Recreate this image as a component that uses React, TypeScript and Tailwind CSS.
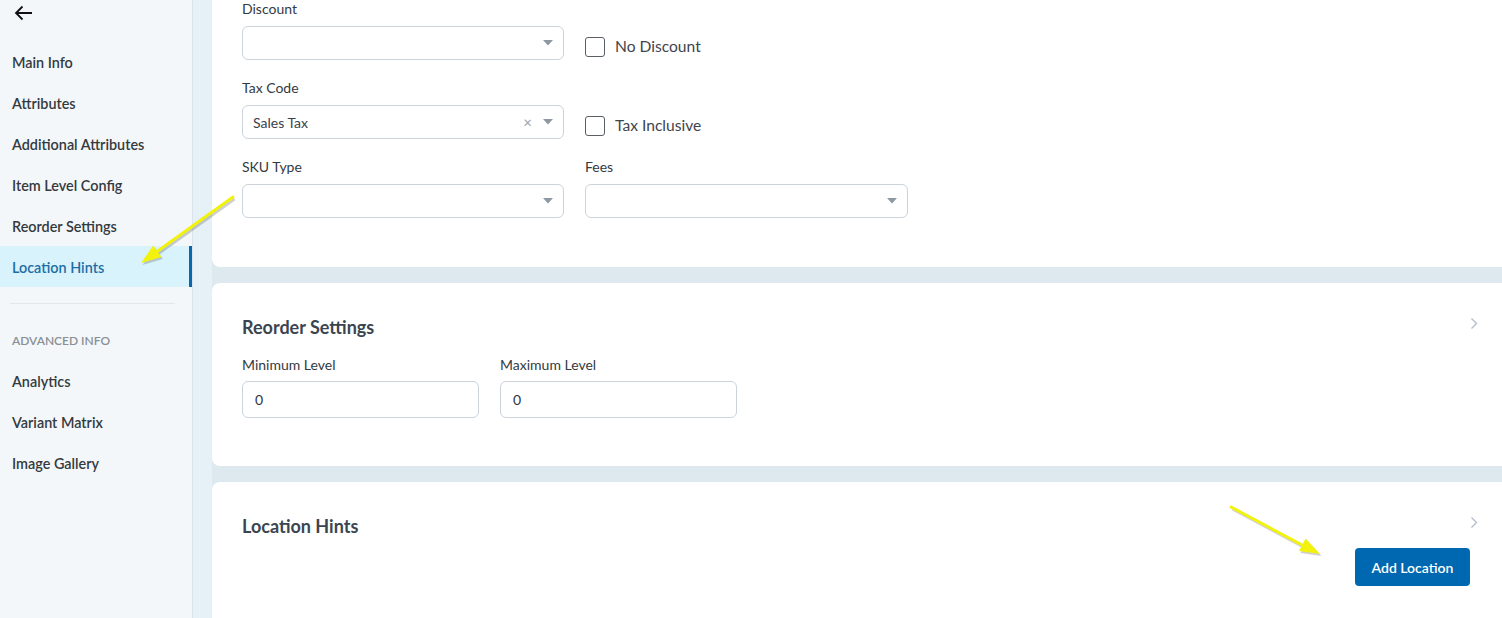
import React from "react";

const navTop = ["Main Info", "Attributes", "Additional Attributes", "Item Level Config", "Reorder Settings"];
const navAdvanced = ["Analytics", "Variant Matrix", "Image Gallery"];

function Caret() {
  return (
    <svg width="10" height="6" viewBox="0 0 10 6" className="shrink-0">
      <path d="M0 0 L10 0 L5 5.5 Z" fill="#8d98a3" />
    </svg>
  );
}

function Chevron() {
  return (
    <svg width="8" height="13" viewBox="0 0 8 13" className="shrink-0">
      <path d="M1.5 1.5 L6.5 6.5 L1.5 11.5" fill="none" stroke="#b7bdcc" strokeWidth="1.4" />
    </svg>
  );
}

function Label({ children }: { children: React.ReactNode }) {
  return <div className="h-[18px] text-[14px] leading-[18px] text-[#333a42]">{children}</div>;
}

function Select({ value, clearable, width }: { value?: string; clearable?: boolean; width: string }) {
  return (
    <div className={`${width} mt-2 flex h-[34px] items-center rounded-md border border-[#ccd3da] bg-white pl-[10px] pr-[10px]`}>
      <span className="flex-1 text-[14px] text-[#3a4149]">{value}</span>
      {clearable && <span className="mr-[11px] text-[15px] leading-none text-[#9aa3ac]">×</span>}
      <Caret />
    </div>
  );
}

function Check({ label }: { label: string }) {
  return (
    <div className="flex items-center gap-[10px] pt-[34px]">
      <div className="h-[20px] w-[20px] rounded-[3px] border border-[#5a5f66] bg-white" />
      <span className="-mt-[3px] text-[15.6px] leading-[20px] text-[#3f454c]">{label}</span>
    </div>
  );
}

function NumberField({ label }: { label: string }) {
  return (
    <div className="w-[237px]">
      <Label>{label}</Label>
      <div className="mt-[7px] flex h-[37px] items-center rounded-md border border-[#ccd3da] px-[12px] text-[14px] text-[#2f353b]">
        0
      </div>
    </div>
  );
}

function NavItem({ children }: { children: React.ReactNode }) {
  return (
    <div className="flex h-[41px] items-center pl-3 pt-[2px] text-[14.4px] font-semibold text-[#343a40]">
      {children}
    </div>
  );
}

export default function App() {
  return (
    <div className="relative flex h-[618px] w-full overflow-hidden font-['Lato',sans-serif]">
      {/* left navigation */}
      <aside className="flex w-[193px] shrink-0 flex-col border-r border-[#dbe3ea] bg-[#f3f7fa]">
        <div className="flex h-[25px] items-center pl-[14px]">
          <svg width="19" height="16" viewBox="0 0 19 16">
            <path d="M18 8 H2 M8.5 1.5 L2 8 L8.5 14.5" fill="none" stroke="#111" strokeWidth="1.8" />
          </svg>
        </div>
        <nav className="mt-4 flex flex-col">
          {navTop.map((n) => (
            <NavItem key={n}>{n}</NavItem>
          ))}
          <div className="flex h-[41px] items-center border-r-[3px] border-[#0a66ad] bg-[#d9f3fc] pl-3 pt-[2px] text-[14.4px] font-semibold text-[#1c6ea6]">
            Location Hints
          </div>
        </nav>
        <div className="ml-[10px] mt-4 w-[165px] border-t border-[#e0e7ed]" />
        <div className="mt-[28px] pl-3 text-[12px] font-semibold leading-[18px] text-[#8a8f95]">ADVANCED INFO</div>
        <div className="mt-[10px] flex flex-col">
          {navAdvanced.map((n) => (
            <NavItem key={n}>{n}</NavItem>
          ))}
        </div>
      </aside>

      <div className="w-[19px] shrink-0 bg-[#e5f0f7]" />

      {/* form cards */}
      <main className="flex flex-1 flex-col gap-4 bg-[#dee8ef]">
        <section className="rounded-bl-lg bg-white pb-[49px] pl-[30px]">
          <div className="flex gap-[21px]">
            <div>
              <Label>Discount</Label>
              <Select width="w-[322px]" />
            </div>
            <Check label="No Discount" />
          </div>
          <div className="mt-[19px] flex gap-[21px]">
            <div>
              <Label>Tax Code</Label>
              <Select width="w-[322px]" value="Sales Tax" clearable />
            </div>
            <Check label="Tax Inclusive" />
          </div>
          <div className="mt-[19px] flex gap-[21px]">
            <div>
              <Label>SKU Type</Label>
              <Select width="w-[322px]" />
            </div>
            <div>
              <Label>Fees</Label>
              <Select width="w-[323px]" />
            </div>
          </div>
        </section>

        <section className="rounded-l-lg bg-white pb-[48px] pl-[30px] pr-[24px] pt-8">
          <div className="flex h-[24px] items-center justify-between">
            <h2 className="text-[18px] font-bold leading-[24px] text-[#3b4550]">Reorder Settings</h2>
            <div className="-mt-[8px]">
              <Chevron />
            </div>
          </div>
          <div className="mt-[17px] flex gap-[21px]">
            <NumberField label="Minimum Level" />
            <NumberField label="Maximum Level" />
          </div>
        </section>

        <section className="flex-1 rounded-tl-lg bg-white pl-[30px] pr-[24px] pt-[32px]">
          <div className="flex h-[24px] items-center justify-between">
            <h2 className="text-[18px] font-bold leading-[24px] text-[#3b4550]">Location Hints</h2>
            <div className="-mt-[8px]">
              <Chevron />
            </div>
          </div>
          <div className="mt-[10px] flex justify-end pr-[8px]">
            <button className="h-[38px] w-[115px] rounded-[4px] bg-[#0068b0] text-[14px] font-semibold text-white">
              Add Location
            </button>
          </div>
        </section>
      </main>

      {/* annotation arrows */}
      <svg className="pointer-events-none absolute inset-0" width="1502" height="618">
        <g opacity="0.18" transform="translate(1.5 2)">
          <line x1="233" y1="197" x2="155" y2="253" stroke="#000" strokeWidth="3" />
          <polygon points="141,263 161.4,257 153.2,245.6" fill="#000" />
          <line x1="1231" y1="507" x2="1304" y2="546" stroke="#000" strokeWidth="3" />
          <polygon points="1320,554 1299,550.9 1305.6,538.5" fill="#000" />
        </g>
        <line x1="233" y1="197" x2="155" y2="253" stroke="#f2f20c" strokeWidth="3" strokeLinecap="round" />
        <polygon points="141,263 161.4,257 153.2,245.6" fill="#f2f20c" />
        <line x1="1231" y1="507" x2="1304" y2="546" stroke="#f2f20c" strokeWidth="3" strokeLinecap="round" />
        <polygon points="1320,554 1299,550.9 1305.6,538.5" fill="#f2f20c" />
      </svg>
    </div>
  );
}
